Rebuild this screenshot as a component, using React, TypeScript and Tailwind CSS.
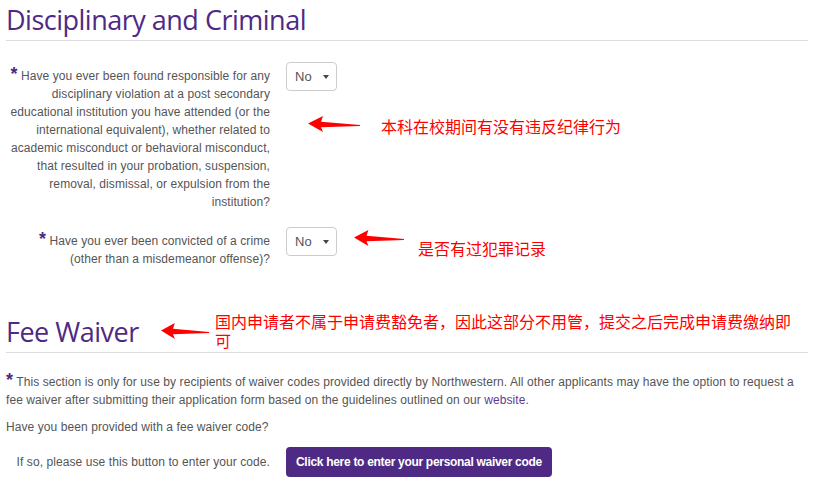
import React from "react"

const sans = { fontFamily: '"Liberation Sans", Arial, sans-serif' }
const heading = { fontFamily: '"Open Sans", "Liberation Sans", sans-serif' }
const cjk = { fontFamily: '"Noto Sans CJK SC", "Liberation Sans", sans-serif' }

// red callout arrow pointing left, as drawn on the screenshot
function Arrow({ className }: { className: string }) {
  return (
    <svg className={className} viewBox="0 0 52 18" preserveAspectRatio="none">
      <polygon points="0,8 15,0 13,6 52,9.5 52,10.5 13,12 15,17" fill="#ff0000" />
    </svg>
  )
}

function Req() {
  return <span className="text-[18px] font-bold leading-[0] text-[#4e2a84]">*</span>
}

function Select() {
  return (
    <div className="ml-[16px] flex h-[29px] w-[51px] shrink-0 items-center rounded-[4px] border border-[#cccccc] bg-white pl-[8px] text-[13px] text-[#555555]">
      <span>No</span>
      <span className="ml-[11px] h-0 w-0 border-x-[3.5px] border-t-[4px] border-x-transparent border-t-[#444444]" />
    </div>
  )
}

export default function App() {
  return (
    <div className="relative min-h-[492px] w-[818px] bg-white tracking-[0.08px]" style={sans}>
      <div className="ml-[6px] w-[802px] pt-[3px]">
        <h2
          className="border-b border-[#dddddd] pb-[3px] text-[27px] leading-[34px] tracking-[-0.5px] text-[#4e2a84]"
          style={heading}
        >
          Disciplinary and Criminal
        </h2>

        <div className="mt-[21px] flex items-start">
          <div className="w-[264px] shrink-0 pt-[5px] text-right text-[12px] leading-[18px] text-[#555555]">
            <Req /> Have you ever been found responsible for any disciplinary violation at a post secondary
            educational institution you have attended (or the international equivalent), whether related to
            academic misconduct or behavioral misconduct, that resulted in your probation, suspension, removal,
            dismissal, or expulsion from the institution?
          </div>
          <Select />
        </div>

        <div className="mt-[16px] flex items-start">
          <div className="w-[264px] shrink-0 pt-[5px] text-right text-[12px] leading-[18px] text-[#555555]">
            <Req /> Have you ever been convicted of a crime
            <br />
            (other than a misdemeanor offense)?
          </div>
          <Select />
        </div>

        <h2
          className="mt-[47px] border-b border-[#dddddd] pb-[3px] text-[27px] leading-[34px] tracking-[-0.5px] text-[#4e2a84]"
          style={heading}
        >
          Fee Waiver
        </h2>

        <p className="mt-[20px] text-[12px] leading-[18px] text-[#555555]">
          <Req /> This section is only for use by recipients of waiver codes provided directly by Northwestern. All
          other applicants may have the option to request a fee waiver after submitting their application form
          based on the guidelines outlined on our <span className="text-[#5b3b94]">website</span>.
        </p>

        <p className="mt-[9px] text-[12px] leading-[18px] text-[#555555]">
          Have you been provided with a fee waiver code?
        </p>

        <div className="mt-[11px] flex items-center">
          <div className="w-[264px] shrink-0 text-right text-[12px] leading-[18px] text-[#555555]">
            If so, please use this button to enter your code.
          </div>
          <button className="ml-[16px] h-[30px] whitespace-nowrap rounded-[4px] bg-[#4e2a84] px-[10px] text-[12px] font-bold tracking-[-0.3px] text-white">
            Click here to enter your personal waiver code
          </button>
        </div>
      </div>

      {/* annotations drawn over the page */}
      <Arrow className="absolute left-[308px] top-[116px] h-[17px] w-[52px]" />
      <div className="absolute left-[381px] top-[116px] text-[16px] leading-[20px] tracking-normal text-[#ff0000]" style={cjk}>
        本科在校期间有没有违反纪律行为
      </div>

      <Arrow className="absolute left-[354px] top-[230px] h-[17px] w-[50px]" />
      <div className="absolute left-[418px] top-[238px] text-[16px] leading-[20px] tracking-normal text-[#ff0000]" style={cjk}>
        是否有过犯罪记录
      </div>

      <Arrow className="absolute left-[161px] top-[323px] h-[17px] w-[48px]" />
      <div className="absolute left-[215px] top-[312px] w-[585px] text-[16px] leading-[19px] tracking-normal text-[#ff0000]" style={cjk}>
        国内申请者不属于申请费豁免者，因此这部分不用管，提交之后完成申请费缴纳即可
      </div>
    </div>
  )
}
